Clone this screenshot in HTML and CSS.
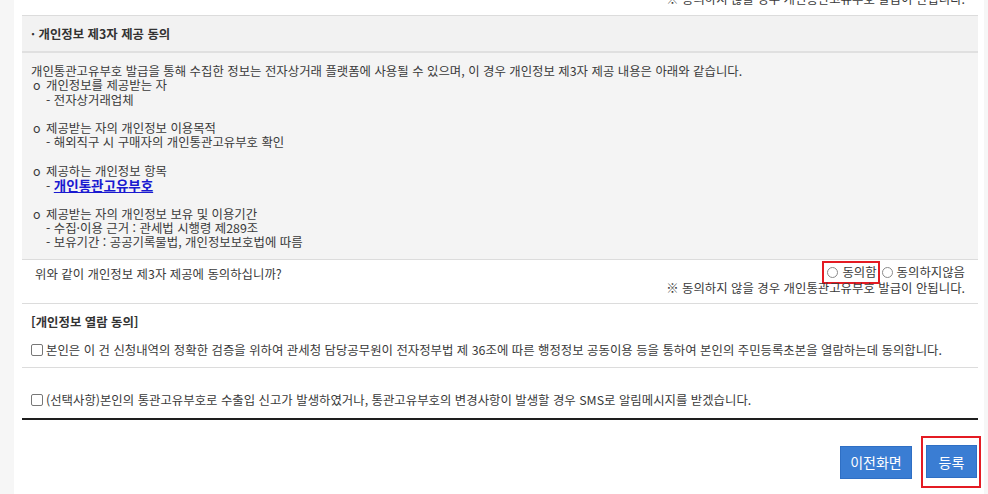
FILE: index.html
```html
<!DOCTYPE html>
<html lang="ko">
<head>
<meta charset="utf-8">
<link rel="stylesheet" href="styles.css">
</head>
<body>
<div class="page">
  <div class="side-left"></div>
  <main class="main">
    <div class="top-note">※ 동의하지 않을 경우 개인통관고유부호 발급이 안됩니다.</div>
    <section class="consent">
      <div class="head">· 개인정보 제3자 제공 동의</div>
      <div class="body">
        <p class="line">개인통관고유부호 발급을 통해 수집한 정보는 전자상거래 플랫폼에 사용될 수 있으며, 이 경우 개인정보 제3자 제공 내용은 아래와 같습니다.</p>
        <p class="line item"><span class="bullet">o</span>개인정보를 제공받는 자</p>
        <p class="line sub">- 전자상거래업체</p>
        <p class="line blank"></p>
        <p class="line item"><span class="bullet">o</span>제공받는 자의 개인정보 이용목적</p>
        <p class="line sub">- 해외직구 시 구매자의 개인통관고유부호 확인</p>
        <p class="line blank"></p>
        <p class="line item"><span class="bullet">o</span>제공하는 개인정보 항목</p>
        <p class="line sub">- <a class="code-link" href="#">개인통관고유부호</a></p>
        <p class="line blank"></p>
        <p class="line item"><span class="bullet">o</span>제공받는 자의 개인정보 보유 및 이용기간</p>
        <p class="line sub">- 수집·이용 근거 : 관세법 시행령 제289조</p>
        <p class="line sub">- 보유기간 : 공공기록물법, 개인정보보호법에 따름</p>
      </div>
      <div class="question">
        <div class="q-text">위와 같이 개인정보 제3자 제공에 동의하십니까?</div>
        <div class="q-answer">
          <div class="radios">
            <label class="radio hl"><span class="radio-dot"></span>동의함</label>
            <label class="radio"><span class="radio-dot"></span>동의하지않음</label>
          </div>
          <div class="note">※ 동의하지 않을 경우 개인통관고유부호 발급이 안됩니다.</div>
        </div>
      </div>
    </section>
    <section class="view">
      <div class="view-title">[개인정보 열람 동의]</div>
      <label class="check"><span class="box"></span>본인은 이 건 신청내역의 정확한 검증을 위하여 관세청 담당공무원이 전자정부법 제 36조에 따른 행정정보 공동이용 등을 통하여 본인의 주민등록초본을 열람하는데 동의합니다.</label>
    </section>
    <section class="sms">
      <label class="check"><span class="box"></span>(선택사항)본인의 통관고유부호로 수출입 신고가 발생하였거나, 통관고유부호의 변경사항이 발생할 경우 SMS로 알림메시지를 받겠습니다.</label>
    </section>
    <div class="actions">
      <button class="btn">이전화면</button>
      <span class="btn-hl"><button class="btn btn-small">등록</button></span>
    </div>
  </main>
  <div class="side-right"></div>
</div>
</body>
</html>
```

FILE: styles.css
```css
* { box-sizing: border-box; }
html, body { margin: 0; padding: 0; }
body {
  font-family: "Noto Sans CJK KR", "Noto Sans", sans-serif;
  font-size: 12.4px;
  color: #3a3a3a;
  background: #fff;
  overflow: hidden;
}
.page {
  display: flex;
  width: 988px;
  height: 494px;
}
.side-left { width: 14px; background: #f6f6f6; flex: none; }
.side-right { width: 4px; background: #f6f6f6; flex: none; }
.main {
  flex: 1;
  background: #fff;
  padding: 0 6px 0 8px;
  display: flex;
  flex-direction: column;
}
.top-note {
  margin-top: -9px;
  height: 25px;
  line-height: 16px;
  text-align: right;
  padding-right: 13px;
  border-bottom: 1px solid #dcdcdc;
  flex: none;
}
.consent .head {
  background: #f2f2f2;
  height: 37px;
  display: flex;
  align-items: center;
  padding-left: 9px;
  padding-top: 1px;
  font-weight: bold;
  color: #333;
  border-bottom: 2px solid #e0e0e0;
}
.consent .body {
  background: #f4f4f4;
  padding: 11px 9px 10px;
  border-bottom: 1px solid #dcdcdc;
}
.line {
  margin: 0;
  line-height: 14.25px;
  height: 14.25px;
  white-space: nowrap;
}
.item { padding-left: 2px; }
.bullet { display: inline-block; width: 13px; }
.sub { padding-left: 15px; }
.code-link {
  color: #1a1ad0;
  font-weight: bold;
  font-size: 13.5px;
  text-decoration: underline;
}
.question {
  display: flex;
  justify-content: space-between;
  align-items: flex-start;
  padding: 1px 13px 7px 13px;
  border-bottom: 1px solid #dcdcdc;
}
.q-text { line-height: 16px; padding-top: 5px; }
.q-answer {
  display: flex;
  flex-direction: column;
  align-items: flex-end;
}
.radios { display: flex; align-items: center; gap: 2px; }
.radio {
  display: inline-flex;
  align-items: center;
  gap: 4px;
  line-height: 15px;
}
.radio.hl {
  border: 2px solid #e41b23;
  padding: 2px 1px 2px 3px;
}
.radio-dot {
  width: 11px;
  height: 11px;
  border: 1px solid #8a8a8a;
  border-radius: 50%;
  background: #fff;
}
.note { line-height: 16px; margin-top: -4px; }
.view {
  padding: 10px 9px 9px;
  border-bottom: 1px solid #dcdcdc;
}
.view-title {
  font-weight: bold;
  color: #333;
  line-height: 16px;
  margin-bottom: 12px;
}
.check {
  display: flex;
  align-items: center;
  gap: 3px;
  line-height: 16px;
  white-space: nowrap;
}
.box {
  width: 12px;
  height: 12px;
  border: 1px solid #777;
  border-radius: 2px;
  background: #fff;
  flex: none;
}
.sms {
  padding: 24px 9px 10px;
  border-bottom: 2px solid #1e1e1e;
}
.actions {
  display: flex;
  justify-content: flex-end;
  align-items: center;
  gap: 9px;
  margin-top: 16px;
  margin-right: -3px;
}
.btn {
  font-family: "Noto Sans CJK KR", "Noto Sans", sans-serif;
  font-size: 14px;
  color: #fff;
  background: #3a7dd3;
  border: 1px solid #2f6fc4;
  height: 33px;
  width: 72px;
  padding: 0;
  cursor: pointer;
}
.btn-small { width: 51px; }
.btn-hl {
  display: inline-flex;
  border: 2px solid #e41b23;
  padding: 7px 2px 8px 3px;
}
```
